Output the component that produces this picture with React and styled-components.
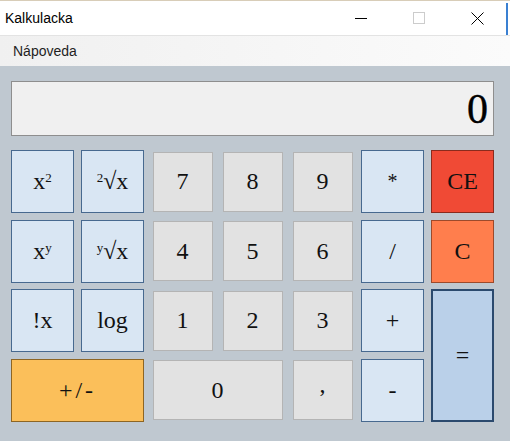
import styled, { createGlobalStyle } from "styled-components";

const GlobalStyle = createGlobalStyle`
  html, body {
    margin: 0;
    padding: 0;
    width: 510px;
    height: 441px;
    overflow: hidden;
  }
  * {
    box-sizing: border-box;
  }
`;

const Window = styled.div`
  width: 510px;
  height: 441px;
  display: flex;
  flex-direction: column;
  font-family: "Liberation Sans", Arial, sans-serif;
`;

const TitleBar = styled.div`
  height: 36px;
  display: flex;
  align-items: center;
  background: #ffffff;
  border-top: 1px solid #d8cdb8;
  border-bottom: 1px solid #e3e3e3;
`;

const Title = styled.span`
  flex: 1;
  padding-left: 5px;
  font-size: 14px;
  color: #000;
`;

const Control = styled.div`
  width: 58px;
  height: 100%;
  display: flex;
  align-items: center;
  justify-content: center;
`;

const Edge = styled.div`
  width: 2px;
  height: 32px;
  align-self: flex-end;
  margin-right: 2px;
  background: #3a80d2;
`;

const MenuBar = styled.div`
  height: 30px;
  display: flex;
  align-items: center;
  padding-left: 13px;
  background: linear-gradient(to right, #f0f0f0, #fbfbfb);
  font-size: 14px;
  color: #1e1e1e;
`;

const Body = styled.div`
  flex: 1;
  background: #bfc8d0;
  padding: 15px 16px 0 11px;
`;

const Display = styled.div`
  height: 55px;
  display: flex;
  align-items: center;
  justify-content: flex-end;
  padding-right: 5px;
  background: #f0f0f0;
  border: 1px solid #8e8e8e;
  font-family: "Liberation Serif", "Times New Roman", serif;
  font-size: 42px;
  -webkit-text-stroke: 0.4px #000;
  color: #000;
`;

const Keypad = styled.div`
  margin-top: 14px;
  display: grid;
  grid-template-columns: repeat(7, 63px);
  grid-template-rows: repeat(4, 63px);
  column-gap: 7px;
  row-gap: 6.67px;
`;

const palette = {
  fn: { bg: "#d9e6f3", border: "#47698f", width: 1 },
  num: { bg: "#e2e2e2", border: "#b4b4b4", width: 1 },
  ce: { bg: "#f04a35", border: "#8a2b1d", width: 1 },
  c: { bg: "#ff7e4d", border: "#9c4a2b", width: 1 },
  sign: { bg: "#fbbf5a", border: "#8d6523", width: 1 },
  eq: { bg: "#bad0e9", border: "#2b4a6e", width: 2 },
};

const Key = styled.button`
  grid-column: span ${(p) => p.$cols || 1};
  grid-row: span ${(p) => p.$rows || 1};
  margin: ${(p) => (p.$variant === "num" ? "1.5px" : "0")};
  padding: 0;
  display: flex;
  align-items: center;
  justify-content: center;
  background: ${(p) => palette[p.$variant].bg};
  border: ${(p) => palette[p.$variant].width}px solid
    ${(p) => palette[p.$variant].border};
  border-radius: 0;
  font-family: "Liberation Serif", "Times New Roman", serif;
  font-size: ${(p) => (p.$small ? "20px" : "24px")};
  letter-spacing: ${(p) => (p.$spaced ? "3px" : "0")};
  color: #111;
  cursor: pointer;
`;

const Label = styled.span`
  display: inline-block;
  white-space: nowrap;
`;

const Sup = styled.span`
  font-size: 13px;
  vertical-align: 7px;
  line-height: 0;
`;

const Raised = styled.span`
  display: inline-block;
  transform: translateY(-6px);
`;

export default function App() {
  return (
    <>
      <GlobalStyle />
      <Window>
        <TitleBar>
          <Title>Kalkulacka</Title>
          <Control>
            <svg width="12" height="12" viewBox="0 0 12 12">
              <line x1="0" y1="6.5" x2="12" y2="6.5" stroke="#000" strokeWidth="1" />
            </svg>
          </Control>
          <Control>
            <svg width="12" height="12" viewBox="0 0 12 12">
              <rect x="0.5" y="0.5" width="11" height="11" fill="none" stroke="#cccccc" strokeWidth="1" />
            </svg>
          </Control>
          <Control>
            <svg width="13" height="13" viewBox="0 0 13 13">
              <path d="M0.5 0.5 L12.5 12.5 M12.5 0.5 L0.5 12.5" stroke="#000" strokeWidth="1" />
            </svg>
          </Control>
          <Edge />
        </TitleBar>
        <MenuBar>Nápoveda</MenuBar>
        <Body>
          <Display>0</Display>
          <Keypad>
            <Key $variant="fn">
              <Label>
                x<Sup>2</Sup>
              </Label>
            </Key>
            <Key $variant="fn">
              <Label>
                <Sup>2</Sup>√x
              </Label>
            </Key>
            <Key $variant="num">7</Key>
            <Key $variant="num">8</Key>
            <Key $variant="num">9</Key>
            <Key $variant="fn" $small>
              *
            </Key>
            <Key $variant="ce">CE</Key>

            <Key $variant="fn">
              <Label>
                x<Sup>y</Sup>
              </Label>
            </Key>
            <Key $variant="fn">
              <Label>
                <Sup>y</Sup>√x
              </Label>
            </Key>
            <Key $variant="num">4</Key>
            <Key $variant="num">5</Key>
            <Key $variant="num">6</Key>
            <Key $variant="fn">/</Key>
            <Key $variant="c">C</Key>

            <Key $variant="fn">!x</Key>
            <Key $variant="fn">log</Key>
            <Key $variant="num">1</Key>
            <Key $variant="num">2</Key>
            <Key $variant="num">3</Key>
            <Key $variant="fn">+</Key>
            <Key $variant="eq" $rows={2}>
              =
            </Key>

            <Key $variant="sign" $cols={2} $spaced>
              +/-
            </Key>
            <Key $variant="num" $cols={2}>
              0
            </Key>
            <Key $variant="num">
              <Raised>,</Raised>
            </Key>
            <Key $variant="fn">-</Key>
          </Keypad>
        </Body>
      </Window>
    </>
  );
}
